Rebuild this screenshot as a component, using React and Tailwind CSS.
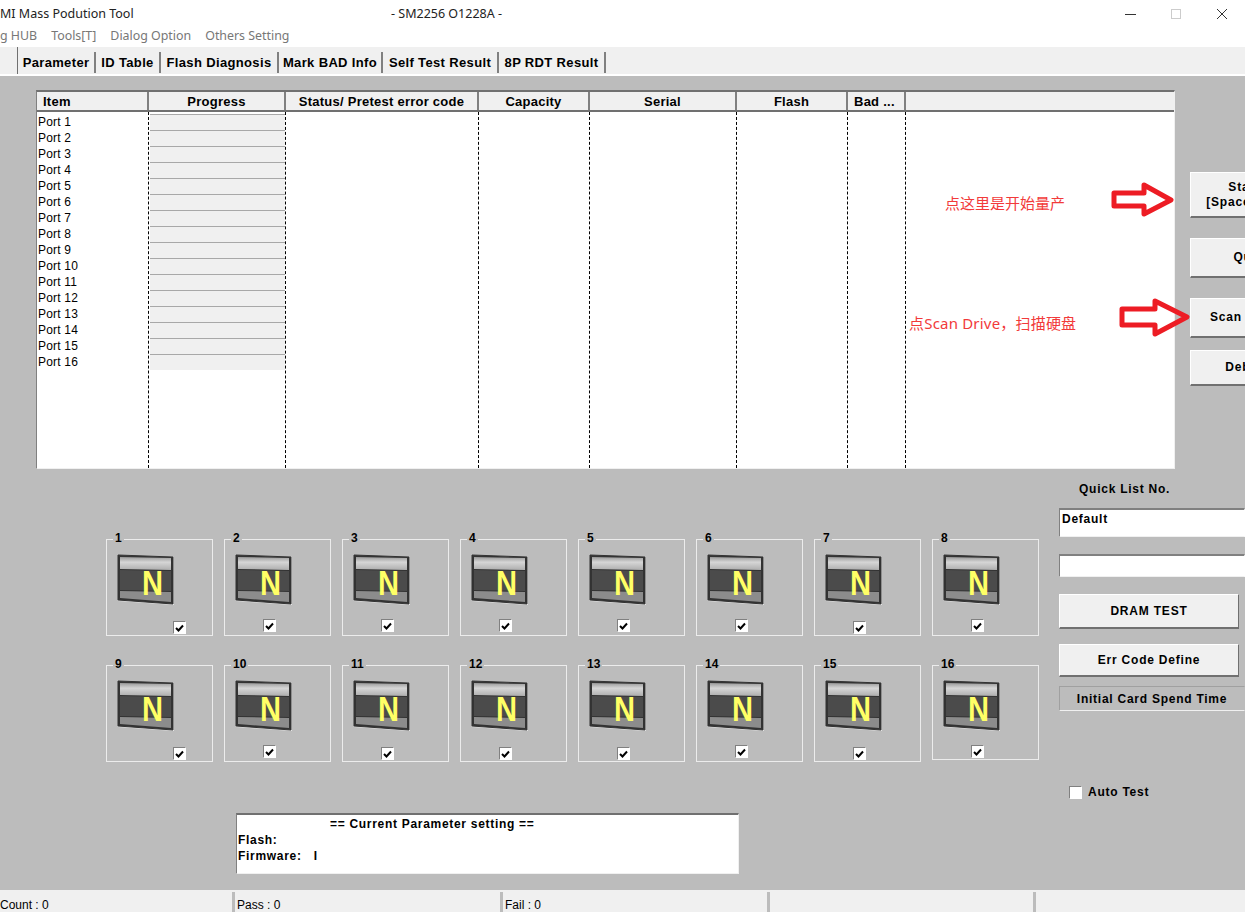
import React from 'react';

const tabs = ['Parameter', 'ID Table', 'Flash Diagnosis', 'Mark BAD Info', 'Self Test Result', '8P RDT Result'];
const tabWidths = [78, 65, 118, 104, 116, 107];

const columns = [
  { label: 'Item', width: 'w-[112px]', align: 'text-left pl-[6px]' },
  { label: 'Progress', width: 'w-[137px]', align: 'text-center' },
  { label: 'Status/ Pretest error code', width: 'w-[193px]', align: 'text-center' },
  { label: 'Capacity', width: 'w-[111px]', align: 'text-center' },
  { label: 'Serial', width: 'w-[147px]', align: 'text-center' },
  { label: 'Flash', width: 'w-[111px]', align: 'text-center' },
  { label: 'Bad ...', width: 'w-[58px]', align: 'text-left pl-[6px]' },
];

const ports = Array.from({ length: 16 }, (_, i) => i + 1);

// checkbox offsets differ per slot in the original dialog
const farCheck = [1, 9];
const lowCheck = [1, 7, 9, 11, 12, 13, 15];

const DriveIcon = ({ id }) => (
  <svg width="58" height="52" viewBox="0 0 58 52" className="block">
    <defs>
      <linearGradient id={`top-${id}`} x1="0" y1="0" x2="0" y2="1">
        <stop offset="0" stopColor="#9a9a9a" />
        <stop offset="0.4" stopColor="#d6d6d6" />
        <stop offset="1" stopColor="#aeaeae" />
      </linearGradient>
    </defs>
    <polygon points="1,1 57,3 57,51 1,47" fill="#e8e8e8" />
    <polygon points="1,1 56,3 56,50 1,46" fill="#333333" stroke="#333333" strokeLinejoin="round" />
    <polygon points="3,3 54,4 54,16 3,15" fill={`url(#top-${id})`} />
    <polygon points="3,16 54,17 54,37 3,36" fill="#4b4b4b" />
    <polygon points="3,37 54,38 54,48 3,44" fill="#8c8c8c" />
    <text x="25" y="41" fontFamily="'Liberation Sans', sans-serif" fontWeight="700" fontSize="35" fill="#ffff66" textLength="21" lengthAdjust="spacingAndGlyphs">N</text>
  </svg>
);

const CheckBox = ({ checked }) => (
  <span className="flex h-[13px] w-[13px] items-center justify-center border border-t-[#808080] border-l-[#808080] border-r-white border-b-white bg-white">
    {checked && (
      <svg width="9" height="8" viewBox="0 0 9 8">
        <path d="M1 4 L3.5 6.5 L8 1.5" fill="none" stroke="#000" strokeWidth="2" />
      </svg>
    )}
  </span>
);

const DriveSlot = ({ n }) => {
  const far = farCheck.includes(n);
  const low = lowCheck.includes(n);
  return (
    <div className={`relative w-[107px] border border-[#ececec] ${n === 16 ? 'h-[95px]' : 'h-[97px]'}`}>
      <span className="absolute -top-[10px] left-[6px] bg-[#bcbcbc] px-[2px] text-[12px] leading-[16px] font-bold text-black">{n}</span>
      <div className="ml-[10px] mt-[14px]">
        <DriveIcon id={n} />
      </div>
      <div className={`${far ? 'ml-[66px]' : 'ml-[38px]'} ${low ? 'mt-[15px]' : 'mt-[13px]'}`}>
        <CheckBox checked />
      </div>
    </div>
  );
};

const SideButton = ({ className, children }) => (
  <div className={`flex shrink-0 items-center justify-center border border-t-white border-l-white border-r-[#707070] border-b-[#707070] border-b-2 bg-[#f0f0f0] text-[12px] leading-[15px] font-bold tracking-[0.8px] text-black text-center ${className}`}>
    <div>{children}</div>
  </div>
);

export default function App() {
  return (
    <div className="relative flex h-[912px] w-[1245px] flex-col overflow-hidden bg-[#bcbcbc] font-['Liberation_Sans',sans-serif]">
      {/* Title bar */}
      <div className="flex h-[26px] items-center bg-white pt-[2px] text-[12.5px] text-[#222] font-['Noto_Sans',sans-serif]">
        <span className="w-[391px] shrink-0">MI Mass Podution Tool</span>
        <span className="w-[725px] shrink-0">- SM2256 O1228A -</span>
        <div className="flex items-center">
          <svg width="12" height="12" viewBox="0 0 12 12" className="ml-[9px]"><path d="M0 6.5 H11" stroke="#333" /></svg>
          <svg width="12" height="12" viewBox="0 0 12 12" className="ml-[33px]"><rect x="1.5" y="1.5" width="9" height="9" fill="none" stroke="#ccc" /></svg>
          <svg width="12" height="12" viewBox="0 0 12 12" className="ml-[34px]"><path d="M1 1 L11 11 M11 1 L1 11" stroke="#333" /></svg>
        </div>
      </div>

      {/* Menu */}
      <div className="flex h-[21px] items-center gap-[14px] bg-white text-[12.4px] text-[#777] font-['Noto_Sans',sans-serif]">
        <span>g HUB</span>
        <span>Tools[T]</span>
        <span>Dialog Option</span>
        <span>Others Setting</span>
      </div>

      {/* Tabs */}
      <div className="flex h-[29px] items-start border-b-2 border-white bg-[#f0f0f0]">
        <div className="h-[27px] w-[18px] border-r border-[#707070]" />
        {tabs.map((tab, i) => (
          <div
            key={tab}
            className="mt-[5px] flex h-[21px] items-center justify-center border-r-2 border-[#808080] text-[13px] font-bold tracking-[0.35px] text-black"
            style={{ width: tabWidths[i] }}
          >
            {tab}
          </div>
        ))}
      </div>

      {/* Table + main buttons */}
      <div className="flex h-[393px] shrink-0 pl-[36px] pt-[14px]">
        <div className="flex h-[379px] w-[1139px] shrink-0 flex-col border border-t-2 border-t-[#707070] border-l-[#808080] border-r-[#f0f0f0] border-b-[#f0f0f0] bg-white">
          <div className="flex h-[20px] shrink-0 border-b-2 border-[#707070] bg-[#f0f0f0]">
            {columns.map((c) => (
              <div key={c.label} className={`${c.width} ${c.align} shrink-0 border-r-2 border-[#808080] text-[13px] leading-[20px] font-bold tracking-[0.25px] text-black`}>
                {c.label}
              </div>
            ))}
          </div>
          <div className="flex flex-1">
            {columns.map((c, idx) => (
              <div key={c.label} className={`${c.width} shrink-0 border-r border-dashed border-black`}>
                {idx === 0 && (
                  <div className="pt-[2px] pl-[1px]">
                    {ports.map((p) => (
                      <div key={p} className="h-[16px] text-[12px] leading-[17px] tracking-[0.2px] text-black">Port {p}</div>
                    ))}
                  </div>
                )}
                {idx === 1 && (
                  <div className="pt-[2px] pl-[1px]">
                    {ports.map((p) => (
                      <div key={p} className="h-[16px] border-t border-[#a8a8a8] bg-[#f0f0f0]" />
                    ))}
                  </div>
                )}
              </div>
            ))}
          </div>
        </div>

        <div className="ml-[15px] flex shrink-0 flex-col pt-[82px]">
          <SideButton className="h-[46px] w-[110px] border-t-[#707070] border-l-[#707070] pr-[2px]">Start<br />[Space Bar]</SideButton>
          <SideButton className="mt-[20px] h-[40px] w-[110px] pl-[4px]">Quit</SideButton>
          <SideButton className="mt-[20px] h-[40px] w-[110px]">Scan Drive</SideButton>
          <SideButton className="mt-[12px] h-[36px] w-[110px] pl-[2px]">Debug</SideButton>
        </div>
      </div>

      {/* Drive slots + side panel */}
      <div className="flex flex-1">
        <div className="w-[1059px] shrink-0 pl-[106px] pt-[70px]">
          <div className="grid w-[933px] grid-cols-8 items-start gap-x-[11px] gap-y-[29px]">
            {ports.map((n) => (
              <DriveSlot key={n} n={n} />
            ))}
          </div>
          <div className="ml-[130px] mt-[51px] h-[61px] w-[503px] border border-t-2 border-t-[#707070] border-l-[#808080] border-r-[#f0f0f0] border-b-[#f0f0f0] bg-white pl-[1px] text-[12px] leading-[16px] font-bold tracking-[0.7px] text-black">
            <div className="pl-[92px] pt-[1px]">== Current Parameter setting ==</div>
            <div>Flash:</div>
            <div className="flex">
              <span>Firmware:</span>
              <span className="ml-[12px]">I</span>
            </div>
          </div>
        </div>

        <div className="flex shrink-0 flex-col pt-[12px] text-[12px] font-bold tracking-[0.75px] text-black">
          <div className="ml-[20px] h-[16px] leading-[16px]">Quick List No.</div>
          <div className="mt-[11px] h-[29px] w-[186px] border border-t-2 border-t-[#808080] border-l-[#808080] border-r-transparent border-b-[#f0f0f0] bg-white pl-[2px] leading-[18px]">Default</div>
          <div className="mt-[17px] h-[23px] w-[186px] border border-t-2 border-t-[#808080] border-l-[#808080] border-r-transparent border-b-[#f0f0f0] bg-white" />
          <SideButton className="mt-[17px] h-[35px] w-[180px]">DRAM TEST</SideButton>
          <SideButton className="mt-[15px] h-[33px] w-[180px]">Err Code Define</SideButton>
          <div className="mt-[9px] flex h-[25px] w-[186px] items-center justify-center border border-t-[#a0a0a0] border-l-[#a0a0a0] border-r-transparent border-b-[#f0f0f0]">Initial Card Spend Time</div>
          <div className="ml-[10px] mt-[72px] flex items-center gap-[6px]">
            <CheckBox />
            <span>Auto Test</span>
          </div>
        </div>
      </div>

      {/* Status bar */}
      <div className="flex h-[22px] shrink-0 gap-[3px] border-t-2 border-[#f0f0f0] bg-[#bcbcbc] text-[12px] leading-[26px] text-black">
        <div className="w-[232px] bg-[#f0f0f0]">Count : 0</div>
        <div className="w-[265px] bg-[#f0f0f0] pl-[2px]">Pass : 0</div>
        <div className="w-[264px] bg-[#f0f0f0] pl-[2px]">Fail : 0</div>
        <div className="w-[263px] bg-[#f0f0f0]" />
        <div className="flex-1 bg-[#f0f0f0]" />
      </div>

      {/* Red annotations pasted over the screenshot */}
      <span className="absolute left-[945px] top-[193px] text-[15px] leading-[20px] text-[#f23a3a] font-['Noto_Sans_CJK_SC',sans-serif]">点这里是开始量产</span>
      <span className="absolute left-[909px] top-[313px] text-[15px] leading-[20px] tracking-[0.2px] text-[#f23a3a] font-['Noto_Sans','Noto_Sans_CJK_SC',sans-serif]">点Scan Drive，扫描硬盘</span>
      <svg width="66" height="38" viewBox="0 0 66 38" className="absolute left-[1111px] top-[181px]">
        <polygon points="3,12 33,12 33,4 60,19 33,33 33,25 3,25" fill="none" stroke="#ed1c24" strokeWidth="5" strokeLinejoin="round" />
      </svg>
      <svg width="74" height="42" viewBox="0 0 74 42" className="absolute left-[1119px] top-[297px]">
        <polygon points="3,12 36,12 36,4 68,20 36,37 36,28 3,28" fill="none" stroke="#ed1c24" strokeWidth="5" strokeLinejoin="round" />
      </svg>
    </div>
  );
}
